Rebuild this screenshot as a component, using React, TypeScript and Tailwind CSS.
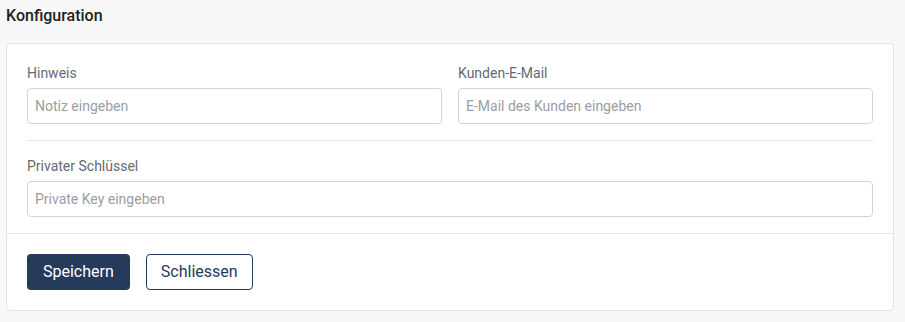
import React from "react";

const Field: React.FC<{ label: string; placeholder: string }> = ({ label, placeholder }) => (
  <div className="flex flex-col">
    <label className="text-[14px] leading-5 text-[#646a73] mb-[5px]">{label}</label>
    <input
      type="text"
      placeholder={placeholder}
      className="h-9 w-full rounded border border-[#d4d4d4] bg-white px-[7px] text-[14px] text-[#333] placeholder:text-[#9a9ea4] outline-none"
    />
  </div>
);

export default function App() {
  return (
    <div className="h-[322px] bg-[#f8f8f8] px-[6px] pt-[6px] font-['Roboto',sans-serif]">
      <h2 className="text-[16px] leading-5 font-medium text-[#222] mb-[17px]">Konfiguration</h2>
      <div className="w-[888px] rounded border border-[#e4e4e4] bg-white">
        <div className="px-5 pt-[19px] pb-4">
          <div className="grid grid-cols-2 gap-4">
            <Field label="Hinweis" placeholder="Notiz eingeben" />
            <Field label="Kunden-E-Mail" placeholder="E-Mail des Kunden eingeben" />
          </div>
          <div className="my-4 h-px bg-[#e4e4e4]" />
          <div className="-mt-[1px]">
            <Field label="Privater Schlüssel" placeholder="Private Key eingeben" />
          </div>
        </div>
        <div className="flex gap-4 border-t border-[#e4e4e4] px-5 pt-5 pb-5">
          <button className="h-9 rounded bg-[#263a5c] px-4 text-[16px] text-white">Speichern</button>
          <button className="h-9 rounded border border-[#263a5c] bg-white px-[14px] text-[16px] text-[#263a5c]">
            Schliessen
          </button>
        </div>
      </div>
    </div>
  );
}
